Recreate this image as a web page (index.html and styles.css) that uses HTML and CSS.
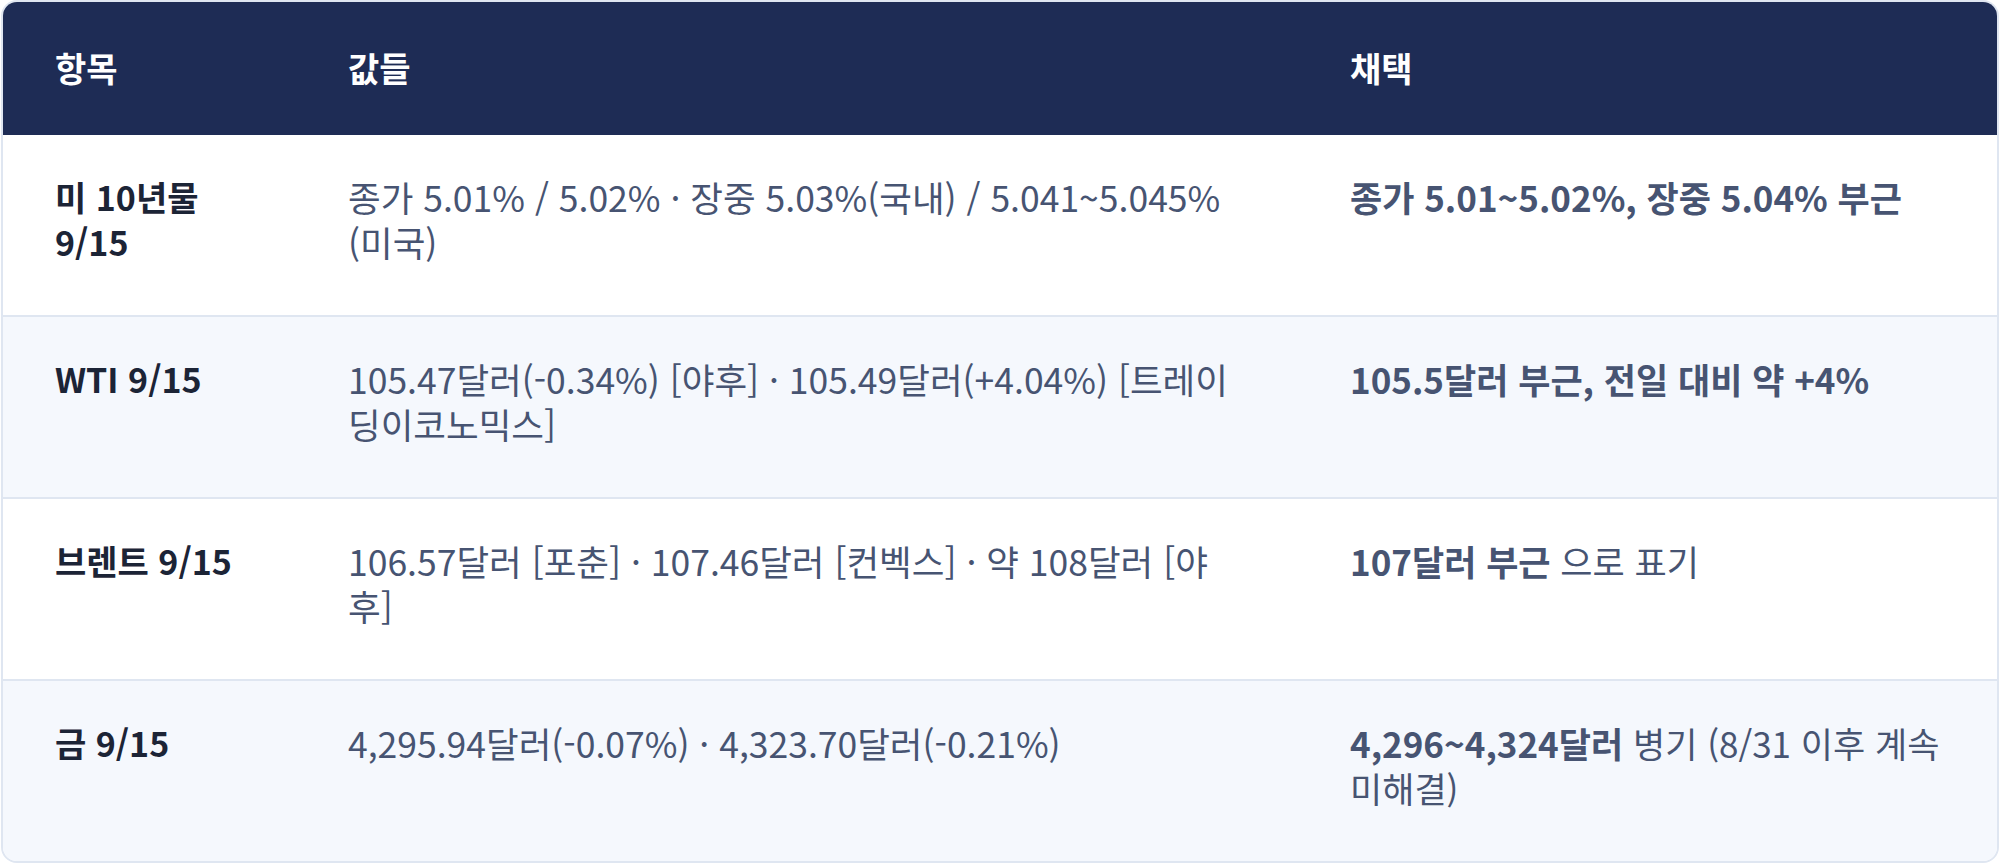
FILE: index.html
```html
<!DOCTYPE html>
<html lang="ko">
<head>
<meta charset="utf-8">
<title>시세 비교</title>
<link rel="stylesheet" href="styles.css">
</head>
<body>
<div class="card">
  <table class="grid">
    <colgroup>
      <col class="c-item">
      <col class="c-vals">
      <col class="c-pick">
    </colgroup>
    <thead>
      <tr>
        <th>항목</th>
        <th>값들</th>
        <th>채택</th>
      </tr>
    </thead>
    <tbody>
      <tr>
        <td class="item">미 10년물 9/15</td>
        <td class="vals">종가 5.01% / 5.02% · 장중 5.03%(국내) / 5.041~5.045%(미국)</td>
        <td class="pick"><strong>종가 5.01~5.02%, 장중 5.04% 부근</strong></td>
      </tr>
      <tr>
        <td class="item">WTI 9/15</td>
        <td class="vals">105.47달러(-0.34%) [야후] · 105.49달러(+4.04%) [트레이딩이코노믹스]</td>
        <td class="pick"><strong>105.5달러 부근, 전일 대비 약 +4%</strong></td>
      </tr>
      <tr>
        <td class="item">브렌트 9/15</td>
        <td class="vals">106.57달러 [포춘] · 107.46달러 [컨벡스] · 약 108달러 [야후]</td>
        <td class="pick"><strong>107달러 부근</strong> 으로 표기</td>
      </tr>
      <tr>
        <td class="item">금 9/15</td>
        <td class="vals">4,295.94달러(-0.07%) · 4,323.70달러(-0.21%)</td>
        <td class="pick"><strong>4,296~4,324달러</strong> 병기 (8/31 이후 계속 미해결)</td>
      </tr>
    </tbody>
  </table>
</div>
</body>
</html>
```

FILE: styles.css
```css
html, body {
  margin: 0;
  padding: 0;
  background: #ffffff;
}

body {
  font-family: "Noto Sans CJK KR", "Noto Sans", sans-serif;
  font-size: 35px;
  line-height: 45px;
  color: #475472;
}

.card {
  margin: 0 1px;
  border: 2px solid #dfe6f1;
  border-radius: 16px;
  overflow: hidden;
  background: #ffffff;
}

.grid {
  width: 100%;
  border-collapse: collapse;
  table-layout: fixed;
}

.c-item { width: 293px; }
.c-vals { width: 1002px; }
.c-pick { width: auto; }

.grid th {
  background: #1e2c55;
  color: #ffffff;
  font-weight: 700;
  font-size: 34px;
  text-align: left;
  padding: 43px 52px 45px;
}

.grid td {
  vertical-align: top;
  text-align: left;
  padding: 39px 52px 51px;
  border-top: 2px solid #dfe6f1;
}

.grid tbody tr:first-child td {
  border-top: none;
}

.grid tbody tr:nth-child(even) td {
  background: #f5f8fd;
}

.item {
  font-weight: 700;
  font-size: 34px;
  color: #1c2436;
}

.vals {
  font-size: 35.5px;
  color: #475472;
}

.pick {
  color: #475472;
}

.pick strong {
  font-weight: 700;
}
```
